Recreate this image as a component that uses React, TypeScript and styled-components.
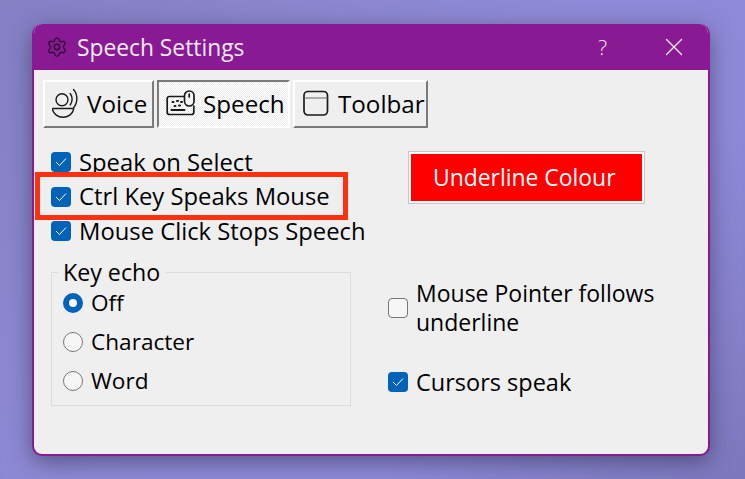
import styled, { createGlobalStyle } from "styled-components";
import { Settings, X } from "lucide-react";

const FONT = `"Open Sans", "Noto Sans", "Liberation Sans", sans-serif`;

const GlobalStyle = createGlobalStyle`
  html, body {
    margin: 0;
    padding: 0;
    width: 745px;
    height: 479px;
    overflow: hidden;
  }
`;

const VoiceIcon = () => (
  <svg width="28" height="30" viewBox="0 0 28 30" fill="none" stroke="#1a1a1a" strokeWidth="1.4" strokeLinecap="round">
    <circle cx="10" cy="11.7" r="6" />
    <path d="M18.2 5.5c2.4 3.6 2.4 8 0 11.5" />
    <path d="M21.5 1.5c4.5 5 4.5 13 0 18.5" />
    <path d="M1 20.5h20c.5 0 .8.4.6 1C20.5 26 16 29.3 11 29.3S1.5 26 .4 21.5c-.2-.6.1-1 .6-1z" />
  </svg>
);

const SpeechIcon = () => (
  <svg width="30" height="28" viewBox="0 0 30 28" fill="none" stroke="#1a1a1a" strokeWidth="1.7" strokeLinecap="round">
    <path d="M18 7.5H3.5C2 7.5 1.2 8.3 1.2 9.8v13.4c0 1.5.8 2.3 2.3 2.3h22c1.5 0 2.3-.8 2.3-2.3V17" />
    <rect x="18.5" y="2" width="9.5" height="15" rx="4.7" />
    <path d="M23.2 5v3" />
    <path d="M6.5 13h1M11 12h1M15 13h1M8.5 17h1M13 16.5h1M5.5 21h13" strokeWidth="2" />
  </svg>
);

const ToolbarIcon = () => (
  <svg width="29" height="26" viewBox="0 0 29 26" fill="none" stroke="#1a1a1a" strokeWidth="1.7">
    <rect x="2" y="1.5" width="23.5" height="23.5" rx="4" />
    <path d="M2 8h23.5" strokeWidth="1" stroke="#666" />
  </svg>
);

const Desktop = styled.div`
  width: 745px;
  height: 479px;
  box-sizing: border-box;
  padding: 24px 35px 23px 32px;
  background: linear-gradient(135deg, #8580c4 0%, #8f8ad6 45%, #8f8ad8 70%, #7d78bd 100%);
  font-family: ${FONT};
`;

const Dialog = styled.div`
  height: 432px;
  display: flex;
  flex-direction: column;
  box-sizing: border-box;
  border-radius: 10px;
  border: 2px solid #8a1a94;
  border-top: none;
  background: #efefef;
  box-shadow: 0 6px 22px rgba(40, 40, 70, 0.55);
  overflow: hidden;
`;

const TitleBar = styled.div`
  height: 46px;
  flex: none;
  display: flex;
  align-items: center;
  background: #8a1a94;
  color: #f5ecf6;
  padding: 0 19px 0 12px;
`;

const TitleIcon = styled.span`
  display: flex;
  color: #2d0f33;
  margin-right: 9px;
`;

const TitleText = styled.span`
  flex: 1;
  font-size: 22.8px;
  line-height: 46px;
  padding-top: 2px;
`;

const HelpMark = styled.span`
  font-size: 21px;
  margin-right: 52px;
  font-weight: 300;
`;

const CloseMark = styled.span`
  display: flex;
`;

const Content = styled.div`
  flex: 1;
  padding: 10px 0 0 9px;
`;

const TabRow = styled.div`
  display: flex;
  gap: 3px;
`;

const Tab = styled.div<{ $active?: boolean; $width: number }>`
  width: ${({ $width }) => $width}px;
  height: 48px;
  box-sizing: border-box;
  display: flex;
  align-items: center;
  gap: 7px;
  padding: 0 0 2px 7px;
  font-size: 24.2px;
  color: #000;
  white-space: nowrap;
  background: ${({ $active }) =>
    $active ? "repeating-conic-gradient(#fff 0 25%, #ececec 0 50%) 0 0 / 2px 2px" : "#efefef"};
  border-style: solid;
  border-width: 2px;
  border-color: ${({ $active }) =>
    $active ? "#7a7a7a #fff #fff #7a7a7a" : "#fff #7a7a7a #7a7a7a #fff"};
`;

const Columns = styled.div`
  display: flex;
  padding: 17px 0 0 8px;
`;

const LeftColumn = styled.div`
  width: 337px;
  flex: none;
`;

const CheckList = styled.div`
  position: relative;
  display: flex;
  flex-direction: column;
`;

const CheckRow = styled.div`
  display: flex;
  align-items: center;
  gap: 8px;
  height: 34.5px;
  font-size: 23.8px;
  line-height: 29px;
  color: #000;
  white-space: nowrap;
`;

const Box = styled.span<{ $checked?: boolean }>`
  width: 20px;
  height: 20px;
  flex: none;
  box-sizing: border-box;
  display: flex;
  align-items: center;
  justify-content: center;
  border-radius: 4px;
  background: ${({ $checked }) => ($checked ? "#0062b8" : "#f6f6f6")};
  border: ${({ $checked }) => ($checked ? "none" : "1px solid #777")};
`;

const Highlight = styled.div`
  position: absolute;
  left: -16px;
  top: 27px;
  width: 313px;
  height: 48px;
  box-sizing: border-box;
  border: 5px solid #ff3010;
`;

const GroupBox = styled.fieldset`
  width: 300px;
  height: 144px;
  box-sizing: border-box;
  margin: 13.5px 0 0 0;
  padding: 1px 0 0 11px;
  border: 1px solid #dcdcdc;
`;

const GroupLegend = styled.legend`
  font-size: 23.2px;
  line-height: 20px;
  padding: 0 6px 0 5px;
  margin-left: -5px;
  color: #000;
`;

const RadioRow = styled.div`
  display: flex;
  align-items: center;
  gap: 8px;
  height: 39px;
  font-size: 22.6px;
  color: #000;
`;

const Radio = styled.span<{ $checked?: boolean }>`
  width: 20px;
  height: 20px;
  flex: none;
  box-sizing: border-box;
  border-radius: 50%;
  background: #f6f6f6;
  border: ${({ $checked }) => ($checked ? "6px solid #0062b8" : "1px solid #777")};
`;

const RightColumn = styled.div`
  flex: 1;
  display: flex;
  flex-direction: column;
  align-items: flex-start;
  padding-top: 7px;
`;

const ColourButton = styled.div`
  width: 234.5px;
  height: 51px;
  box-sizing: border-box;
  margin-left: 21px;
  padding-right: 4px;
  display: flex;
  align-items: center;
  justify-content: center;
  background: #ff0000;
  color: #fff;
  font-size: 22.9px;
  border: 2px solid #fdfdfd;
  outline: 1px solid #c8c8c8;
`;

const PointerRow = styled.div`
  display: flex;
  align-items: center;
  gap: 8px;
  margin-top: 76px;
  font-size: 23px;
  line-height: 29px;
  color: #000;
  white-space: nowrap;
`;

const CursorsRow = styled(CheckRow)`
  margin-top: 28px;
  font-size: 23.5px;
`;

const Check = () => (
  <svg width="12" height="10" viewBox="0 0 12 10" fill="none" stroke="#fff" strokeWidth="1">
    <path d="M1 5l3.5 3.5L11 1.5" />
  </svg>
);

export default function App() {
  return (
    <Desktop>
      <GlobalStyle />
      <Dialog>
        <TitleBar>
          <TitleIcon>
            <Settings size={22} strokeWidth={1.5} />
          </TitleIcon>
          <TitleText>Speech Settings</TitleText>
          <HelpMark>?</HelpMark>
          <CloseMark>
            <X size={30} strokeWidth={1.1} />
          </CloseMark>
        </TitleBar>
        <Content>
          <TabRow>
            <Tab $width={111}>
              <VoiceIcon />
              Voice
            </Tab>
            <Tab $width={133} $active>
              <SpeechIcon />
              Speech
            </Tab>
            <Tab $width={135}>
              <ToolbarIcon />
              Toolbar
            </Tab>
          </TabRow>
          <Columns>
            <LeftColumn>
              <CheckList>
                <CheckRow>
                  <Box $checked><Check /></Box>
                  Speak on Select
                </CheckRow>
                <CheckRow>
                  <Box $checked><Check /></Box>
                  Ctrl Key Speaks Mouse
                </CheckRow>
                <CheckRow>
                  <Box $checked><Check /></Box>
                  Mouse Click Stops Speech
                </CheckRow>
                <Highlight />
              </CheckList>
              <GroupBox>
                <GroupLegend>Key echo</GroupLegend>
                <RadioRow><Radio $checked />Off</RadioRow>
                <RadioRow><Radio />Character</RadioRow>
                <RadioRow><Radio />Word</RadioRow>
              </GroupBox>
            </LeftColumn>
            <RightColumn>
              <ColourButton>Underline Colour</ColourButton>
              <PointerRow>
                <Box />
                <span>Mouse Pointer follows<br />underline</span>
              </PointerRow>
              <CursorsRow>
                <Box $checked><Check /></Box>
                Cursors speak
              </CursorsRow>
            </RightColumn>
          </Columns>
        </Content>
      </Dialog>
    </Desktop>
  );
}
